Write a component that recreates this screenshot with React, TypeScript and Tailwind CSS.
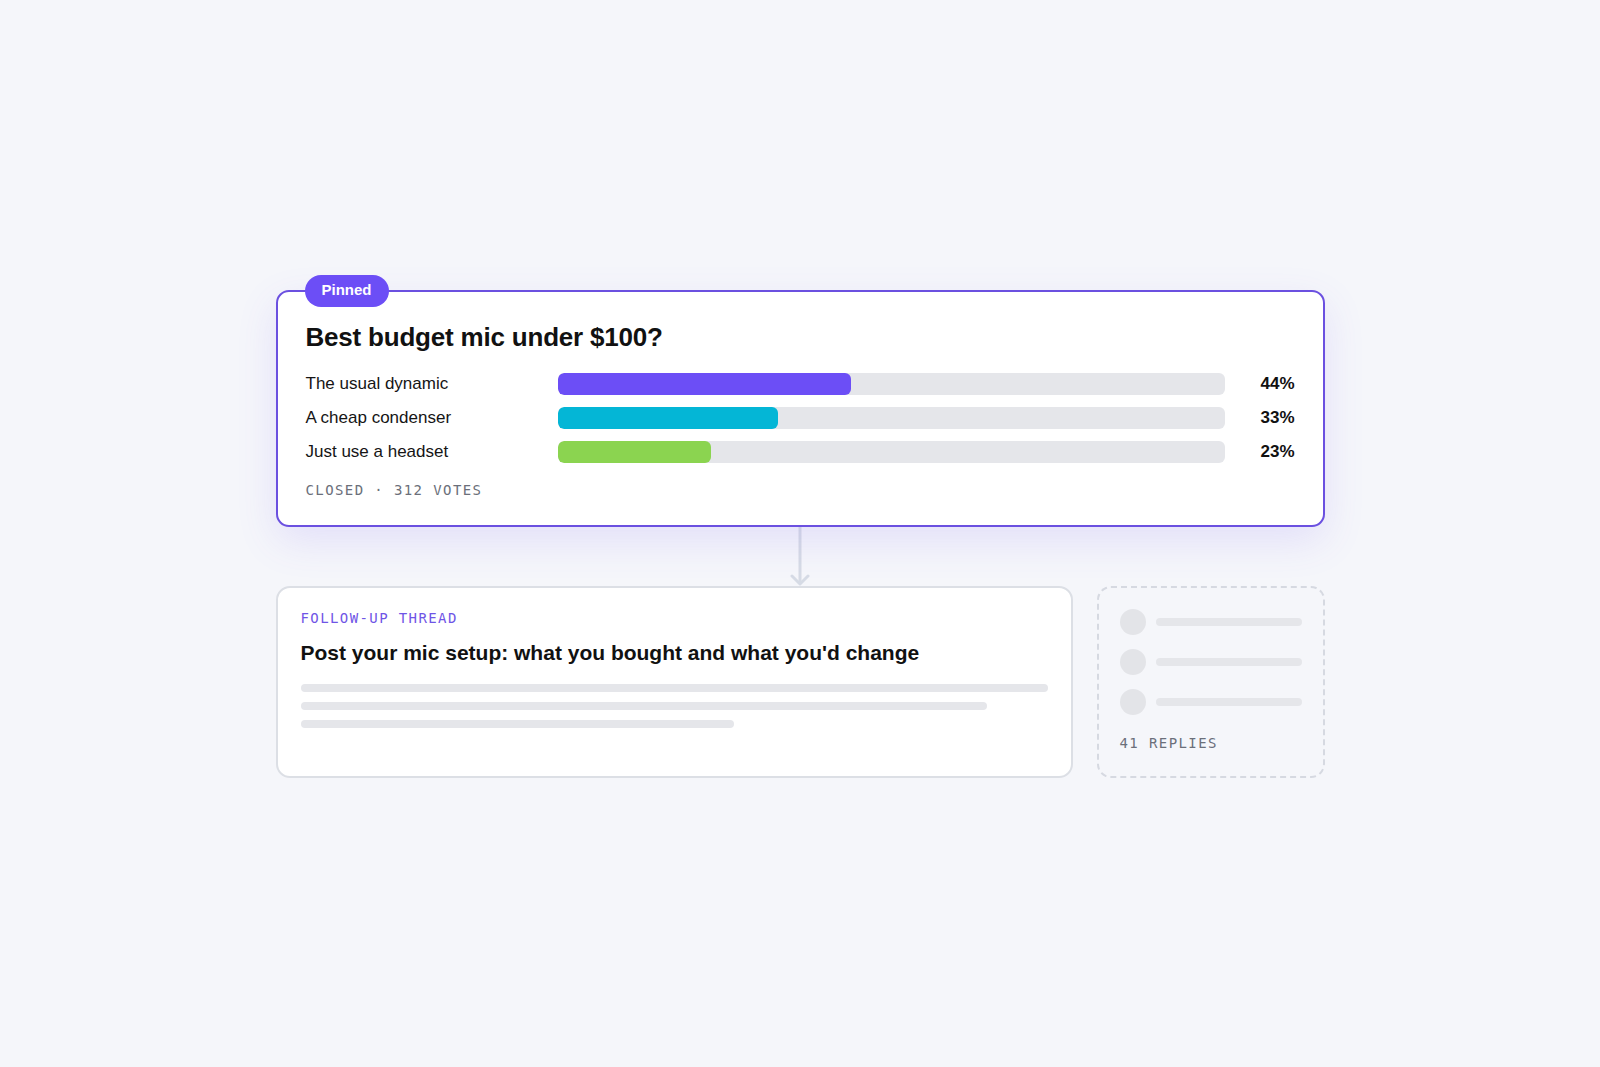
import React from "react";

type PollOption = { label: string; pct: number; color: string };

const options: PollOption[] = [
  { label: "The usual dynamic", pct: 44, color: "bg-[#6c4ef6]" },
  { label: "A cheap condenser", pct: 33, color: "bg-[#04b6d6]" },
  { label: "Just use a headset", pct: 23, color: "bg-[#8bd450]" },
];

function PollCard() {
  return (
    <div className="relative rounded-[13px] border-2 border-[#6b50e0] bg-white px-[28px] pt-[29px] pb-[25px] shadow-[0_14px_40px_rgba(109,78,245,0.13)]">
      <span className="absolute left-[27px] -top-[17px] flex h-8 items-center rounded-full bg-[#6c4ef6] px-[17px] text-[15px] font-bold text-white">
        Pinned
      </span>
      <h2 className="text-[26px] font-bold leading-8 tracking-[-0.2px] text-[#111111]">
        Best budget mic under $100?
      </h2>
      <div className="mt-5 flex flex-col gap-3">
        {options.map((o) => (
          <div key={o.label} className="grid h-[22px] grid-cols-[252px_1fr_70px] items-center">
            <span className="text-[17px] leading-[22px] text-[#151515]">{o.label}</span>
            <div className="h-[22px] overflow-hidden rounded-[6px] bg-[#e5e6ea]">
              <div className={`h-full rounded-[6px] ${o.color}`} style={{ width: `${o.pct}%` }} />
            </div>
            <span className="text-right text-[17px] font-bold leading-[22px] text-[#111111]">{o.pct}%</span>
          </div>
        ))}
      </div>
      <p className="mt-[17px] font-['DejaVu_Sans_Mono',monospace] text-[14px] leading-5 tracking-[0.1em] text-[#6b6f7a]">
        CLOSED · 312 VOTES
      </p>
    </div>
  );
}

function Connector() {
  return (
    <div className="flex h-[59px] justify-center">
      <svg width="24" height="59" viewBox="0 0 24 59" fill="none">
        <line x1="12" y1="0" x2="12" y2="56" stroke="#d6dbe5" strokeWidth="3" />
        <polyline points="4,49 12,57 20,49" stroke="#d6dbe5" strokeWidth="3" strokeLinecap="round" strokeLinejoin="round" fill="none" />
      </svg>
    </div>
  );
}

function ThreadCard() {
  return (
    <div className="flex-1 rounded-[14px] border-2 border-[#dcdfe5] bg-white px-[23px] pt-[20px]">
      <p className="font-['DejaVu_Sans_Mono',monospace] text-[14px] leading-5 tracking-[0.1em] text-[#6f55e6]">
        FOLLOW-UP THREAD
      </p>
      <h3 className="mt-[11px] text-[21px] font-bold leading-7 text-[#111111]">
        Post your mic setup: what you bought and what you'd change
      </h3>
      <div className="mt-[17px] flex flex-col gap-[10px]">
        <div className="h-2 w-full rounded-full bg-[#e5e6ea]" />
        <div className="h-2 w-[686px] rounded-full bg-[#e5e6ea]" />
        <div className="h-2 w-[433px] rounded-full bg-[#e5e6ea]" />
      </div>
    </div>
  );
}

function RepliesCard() {
  return (
    <div className="w-[228px] rounded-[14px] border-2 border-dashed border-[#d6d9e1] px-[21px] pt-[21px] pb-[23px]">
      <div className="flex flex-col gap-[14px]">
        {[0, 1, 2].map((i) => (
          <div key={i} className="flex items-center gap-[10px]">
            <div className="h-[26px] w-[26px] shrink-0 rounded-full bg-[#e3e4e8]" />
            <div className="h-2 flex-1 rounded-full bg-[#e5e6ea]" />
          </div>
        ))}
      </div>
      <p className="mt-[18px] font-['DejaVu_Sans_Mono',monospace] text-[14px] leading-5 tracking-[0.1em] text-[#6b6f7a]">
        41 REPLIES
      </p>
    </div>
  );
}

export default function App() {
  return (
    <div className="flex min-h-screen items-center justify-center bg-[#f5f6fa] font-['Liberation_Sans',Arial,sans-serif]">
      <div className="flex w-[1049px] flex-col">
        <PollCard />
        <Connector />
        <div className="flex items-stretch gap-6">
          <ThreadCard />
          <RepliesCard />
        </div>
      </div>
    </div>
  );
}
